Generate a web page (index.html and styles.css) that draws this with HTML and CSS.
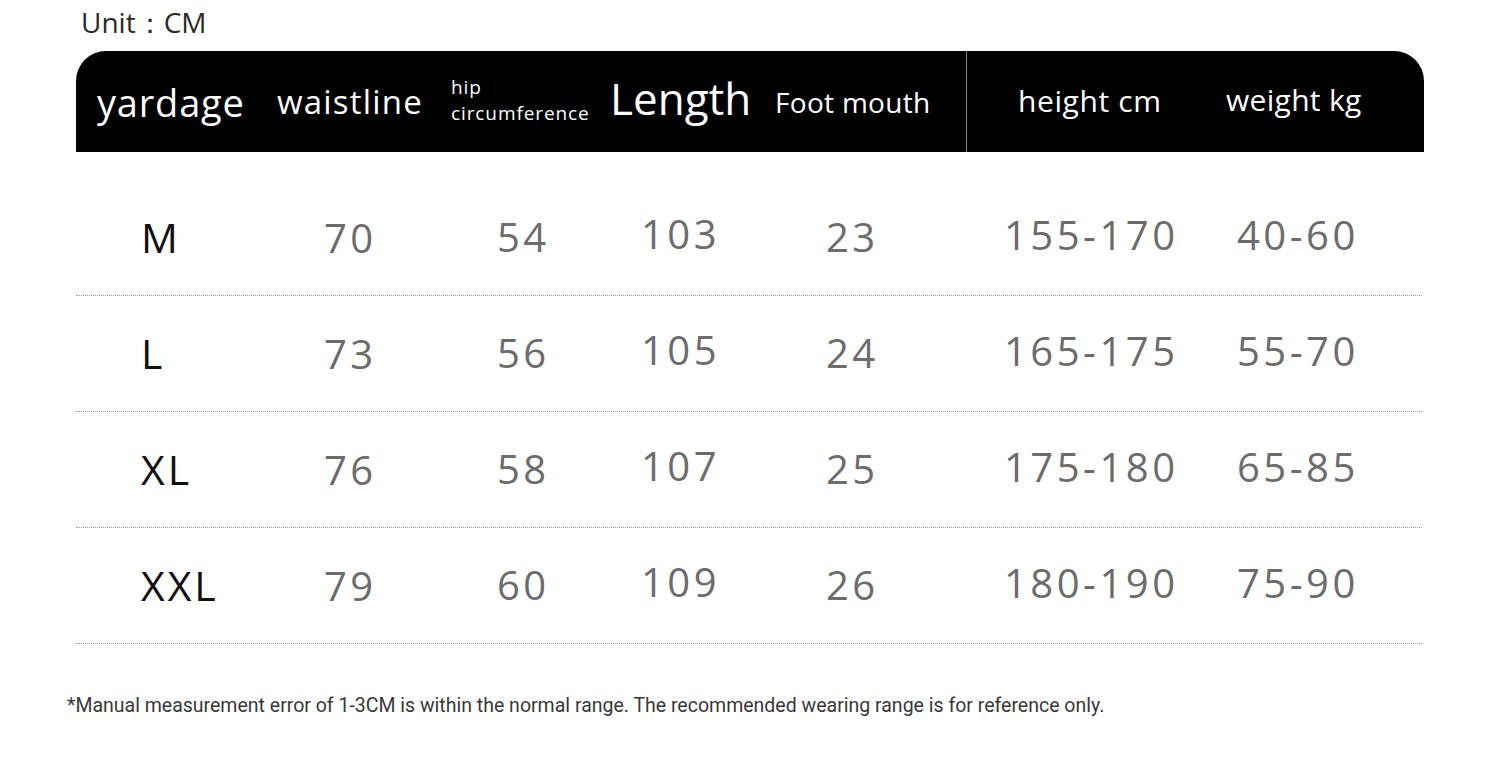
FILE: index.html
```html
<!DOCTYPE html>
<html lang="en">
<head>
<meta charset="utf-8">
<title>Size chart</title>
<link rel="stylesheet" href="styles.css">
</head>
<body>
<div class="page">
  <div class="unit">Unit：CM</div>
  <div class="chart">
    <div class="head">
      <div class="h h-yard">yardage</div>
      <div class="h h-waist">waistline</div>
      <div class="h h-hip"><span>hip</span><span>circumference</span></div>
      <div class="h h-len">Length</div>
      <div class="h h-foot">Foot mouth</div>
      <div class="divider"></div>
      <div class="h h-height">height cm</div>
      <div class="h h-weight">weight kg</div>
    </div>
    <div class="row first">
      <div class="size">M</div>
      <div class="num">70</div>
      <div class="num c-hip">54</div>
      <div class="num c-len">103</div>
      <div class="num c-hip">23</div>
      <div class="num c-rng">155-170</div>
      <div class="num c-rng">40-60</div>
    </div>
    <div class="row">
      <div class="size">L</div>
      <div class="num">73</div>
      <div class="num c-hip">56</div>
      <div class="num c-len">105</div>
      <div class="num c-hip">24</div>
      <div class="num c-rng">165-175</div>
      <div class="num c-rng">55-70</div>
    </div>
    <div class="row">
      <div class="size">XL</div>
      <div class="num">76</div>
      <div class="num c-hip">58</div>
      <div class="num c-len">107</div>
      <div class="num c-hip">25</div>
      <div class="num c-rng">175-180</div>
      <div class="num c-rng">65-85</div>
    </div>
    <div class="row">
      <div class="size">XXL</div>
      <div class="num">79</div>
      <div class="num c-hip">60</div>
      <div class="num c-len">109</div>
      <div class="num c-hip">26</div>
      <div class="num c-rng">180-190</div>
      <div class="num c-rng">75-90</div>
    </div>
  </div>
  <p class="note"><span>*Manual measurement error of 1-3CM is within the normal range. The recommended wearing range is for reference only.</span></p>
</div>
</body>
</html>
```

FILE: styles.css
```css
* { box-sizing: border-box; }
html, body { margin: 0; padding: 0; background: #ffffff; }
body { font-family: "Open Sans", "Noto Sans", sans-serif; color: #111; }

.page { width: 1500px; height: 774px; overflow: hidden; }

.unit {
  padding: 2px 0 0 81px;
  height: 51px;
  font-size: 28px;
  line-height: 40px;
  color: #2a2a2a;
}

.chart { margin-left: 76px; width: 1348px; }

.head {
  height: 101px;
  background: #000;
  color: #fff;
  border-radius: 30px 30px 0 0;
  display: grid;
  grid-template-columns: 180px 174px 159px 165px 191px 1px 259px 1fr;
  padding-left: 21px;
  align-items: center;
}
.h { line-height: 1; white-space: nowrap; }
.h-yard { font-size: 38px; letter-spacing: 0.8px; }
.h-waist { font-size: 33px; letter-spacing: 1.2px; }
.h-hip { font-size: 19px; line-height: 26px; display: flex; flex-direction: column; padding-bottom: 3px; letter-spacing: 0.9px; }
.h-len { font-size: 44px; padding-bottom: 8px; }
.h-foot { font-size: 28px; letter-spacing: 0.3px; }
.divider { align-self: stretch; background: #8a8a8a; }
.h-height { font-size: 30px; margin-left: 51px; letter-spacing: 0.6px; padding-bottom: 2px; }
.h-weight { font-size: 30px; letter-spacing: 0.3px; padding-bottom: 4px; }

.row {
  height: 116px;
  display: grid;
  grid-template-columns: 183px 173px 144px 185px 178px 233px 1fr;
  padding-left: 65px;
  align-items: center;
  border-bottom: 1px dotted #9a9a9a;
  margin-right: 2px;
}
.row.first { margin-top: 28px; }

.size { font-size: 41px; letter-spacing: 3px; color: #111; line-height: 1; }
.num { font-size: 40px; letter-spacing: 3.5px; color: #6c6c6c; line-height: 1; }
.c-hip { padding-bottom: 2px; }
.c-len { padding-bottom: 8px; }
.c-rng { padding-bottom: 6px; }

.note {
  margin: 49px 0 0 67px;
  font-family: Roboto, "Noto Sans", sans-serif;
  font-size: 19.5px;
  line-height: 26px;
  color: #383838;
}
```
